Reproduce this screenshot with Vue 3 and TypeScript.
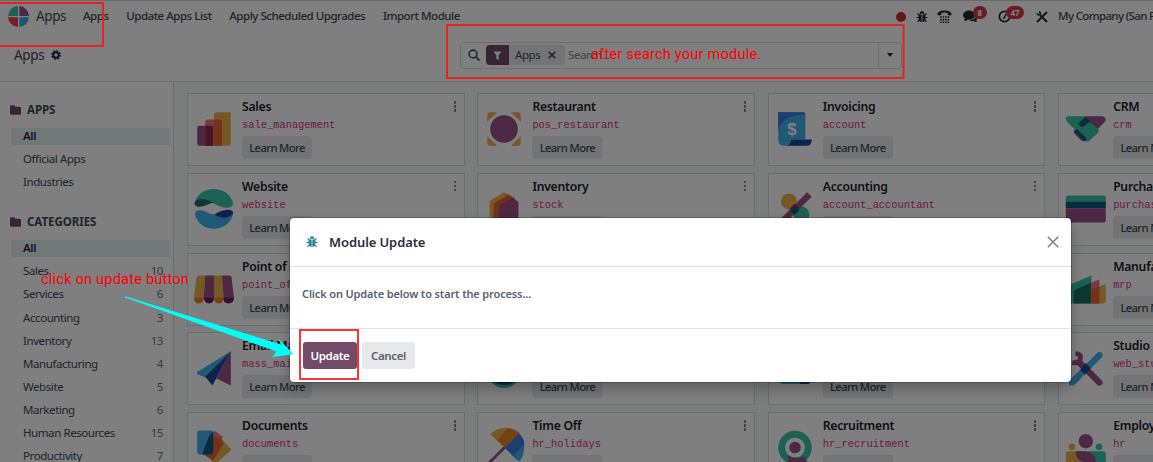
<script setup lang="ts">
interface AppCard {
  title: string
  code: string
  icon: string
}
interface Category {
  name: string
  count?: number
}

const menu: string[] = ['Apps', 'Update Apps List', 'Apply Scheduled Upgrades', 'Import Module']

const appFilters: Category[] = [{ name: 'All' }, { name: 'Official Apps' }, { name: 'Industries' }]

const categories: Category[] = [
  { name: 'All' },
  { name: 'Sales', count: 10 },
  { name: 'Services', count: 6 },
  { name: 'Accounting', count: 3 },
  { name: 'Inventory', count: 13 },
  { name: 'Manufacturing', count: 4 },
  { name: 'Website', count: 5 },
  { name: 'Marketing', count: 6 },
  { name: 'Human Resources', count: 15 },
  { name: 'Productivity', count: 7 },
]

const groups = [
  { title: 'APPS', items: appFilters },
  { title: 'CATEGORIES', items: categories },
]

const apps: AppCard[] = [
  { title: 'Sales', code: 'sale_management', icon: '<path fill="#985184" d="M4 24q0-3 3-3h17v25H7q-3 0-3-3z"/><path fill="#e8787d" d="M14 16q0-3 3-3h18v33H14z"/><path fill="#edb04a" d="M25 8q0-4 4-4h17v38q0 4-4 4H25z"/><path fill="#962b48" d="M14 21h10v25H14z"/><path fill="#ea6030" d="M25 13h7q3 0 3 3v30H25z"/>' },
  { title: 'Restaurant', code: 'pos_restaurant', icon: '<g fill="#edb04a"><path d="M4 8q0-4 4-4h8q-1 2-4 4.500Q8 12 4 16zM46 8q0-4-4-4h-8q1 2 4 4.500 4 3.500 8 7.500zM4 42q0 4 4 4h8q-1-2-4-4.500Q8 38 4 34zM46 42q0 4-4 4h-8q1-2 4-4.500 4-3.500 8-7.500z"/></g><circle cx="25" cy="25" r="17.300" fill="#985184"/>' },
  { title: 'Invoicing', code: 'account', icon: '<path fill="#3fb2ea" d="M4 4h31q3 0 3 3v31l-18 0q0 8-8 8-8 0-8-8z"/><path fill="#3a7be6" d="M4 4h31q3 0 3 3Q9 7 4 27z"/><path fill="#1c4596" d="M20 38h26q0 8-7 8H12q8 0 8-8z"/><text x="21" y="32.500" text-anchor="middle" font-family="Liberation Sans, sans-serif" font-weight="700" font-size="21" fill="#fff">$</text>' },
  { title: 'CRM', code: 'crm', icon: '<path fill="#36c4a6" d="M4 9h23l15 17q1 2-1 4L30 40q-2 2-4 0L2 15Q-1 9 4 9z"/><path fill="#985184" d="M26 9h21q6 2 3 7l-9 9-11-9-8 7-3-5z"/><path fill="#0f5b78" d="m17 18 8-8 7 5-9 7q-5 1-6-4z"/><path fill="#985184" d="M11 26h4l12 12q-4 4-7 1l-9-9z"/><path fill="#0f5b78" d="m15 25 12 12q-1 4-3 3L12 28z"/>' },
  { title: 'Website', code: 'website', icon: '<path fill="#36c4a6" d="M1 18C6-6 43-6 49 18c-1 7-13 7-22 1-6-4-9-2-15 1-7 3-10 3-11-2z"/><path fill="#1a6f66" d="M1 16c5-6 16-3 23 1-7 2-8 4-15 5-6 1-9-2-8-6z"/><path fill="#3fb2ea" d="M1 31c5 25 42 25 48 0 0-7-10-6-21-1-4 3-8 1-14-2-8-3-12-1-13 3z"/><path fill="#1c4596" d="M26 32c7-4 21-10 23-2-4 7-15 8-23 2z"/>' },
  { title: 'Inventory', code: 'stock', icon: '<path fill="#edb04a" d="M25 4 7 15v31h18z"/><path fill="#edb04a" d="m25 4 9 5-14 9z"/><path fill="#ea6030" d="M12 18 31 7l8 5-16 30H12z"/><path fill="#985184" d="m19 20 16-9 8 5v30H19z"/>' },
  { title: 'Accounting', code: 'account_accountant', icon: '<circle cx="17.500" cy="15.500" r="10" fill="#edb04a"/><circle cx="33" cy="32" r="10" fill="#36c4a6"/><path stroke="#985184" stroke-width="8" d="M43 7 8 42"/><path stroke="#962b48" stroke-width="7" d="m27 21-6 6"/><path stroke="#0f5b78" stroke-width="7" d="m28 24-6 6"/>' },
  { title: 'Purchase', code: 'purchase', icon: '<path fill="#36c4a6" d="M1 11q0-3 3-3h44q3 0 3 3v6H1z"/><path fill="#0f5b78" d="M1 16h50v8H1z"/><path fill="#985184" d="M1 24h50v15q0 3-3 3H4q-3 0-3-3z"/>' },
  { title: 'Point of Sale', code: 'point_of_sale', icon: '<path fill="#edb04a" d="M6 8h8l-2 29H0L3 11q1-3 3-3zM25 8h10l2 29H25z"/><path fill="#985184" d="M14 8h11v29H12zM35 8h9q3 0 3 3l3 26H37z"/><path fill="#e68420" d="M0 36h12q0 7-6 7t-6-7zM25 36h12q0 7-6 7t-6-7z"/><path fill="#6c1f5c" d="M12 36h13q0 7-6 7t-7-7zM37 36h13q0 7-7 7t-6-7z"/>' },
  { title: 'Project', code: 'project', icon: '<circle cx="25" cy="25" r="19" fill="#36c4a6"/>' },
  { title: 'eCommerce', code: 'website_sale', icon: '<circle cx="25" cy="25" r="19" fill="#3fb2ea"/>' },
  { title: 'Manufacturing', code: 'mrp', icon: '<path fill="#36c4a6" d="m1 22 32-14v35H4q-3 0-3-3z"/><path fill="#1a6f66" d="M11 27 33 17v26H11z"/><path fill="#e8787d" d="m33 17 10-4v30H33z"/><path fill="#edb04a" d="m43 22 8-3v21q0 3-3 3H33z"/><path fill="#ea6030" d="m33 26 10-4v21H33z"/>' },
  { title: 'Email Marketing', code: 'mass_mailing', icon: '<path fill="#3fb2ea" d="M46 4 4 30q-1 2 1 3l9 4z"/><path fill="#985184" d="M46 4v43L28 38z"/><path fill="#1c4596" d="M46 4 14 36l9 11z"/>' },
  { title: 'Timesheets', code: 'timesheet_grid', icon: '<circle cx="25" cy="29.500" r="20.500" fill="#36c4a6"/><ellipse cx="25" cy="38" rx="15" ry="8" fill="#0f5b78"/>' },
  { title: 'Expenses', code: 'hr_expense', icon: '<path fill="#3fb2ea" d="M6 10h38v31q0 4-4 4H10q-4 0-4-4z"/><path fill="#1c4596" d="M31 24h13v17q0 4-4 4h-9z"/>' },
  { title: 'Studio', code: 'web_studio', icon: '<path stroke="#3fb2ea" stroke-width="8" stroke-linecap="round" d="M43 9 16 36"/><path fill="#3fb2ea" d="M14 32 5 41v6h6l9-9z"/><path stroke="#985184" stroke-width="8" stroke-linecap="round" d="m18 18 25 25"/><path fill="none" stroke="#985184" stroke-width="6" d="M13 7q8 0 6 7-3 6-10 4"/><path fill="#1c4596" d="m26 19 6 6-7 8-6-6z"/>' },
  { title: 'Documents', code: 'documents', icon: '<path fill="#edb04a" d="m34 13 11 12q2 2 0 4L29 43q-2 2-5 0l-8-9z"/><path fill="#e8787d" d="M22 6q3-3 6-1l8 6-3 12-13 4z"/><path fill="#ea6030" d="m24 11 9 3 4 5-13 22-12-8z"/><path fill="#3fb2ea" d="M4 6q0-3 3-3h14q3 0 3 3v24q0 3-3 3H7q-3 0-3-3z"/><path fill="#0f5b78" d="M19 10q2-4 5-5v25q0 3-3 3H10z"/>' },
  { title: 'Time Off', code: 'hr_holidays', icon: '<path stroke="#985184" stroke-width="3.500" d="M27 23 5 45"/><path fill="#edb04a" d="M26 24.600 8 8Q15 0 26 0l8 1z"/><path fill="#e68420" d="M17 15 30 0q9 1 15 7L26 24.600z"/><path fill="#3a7be6" d="M26 24.600 44 7q8 8 6 18l-9 15z"/><path fill="#3fb2ea" d="m36 35 14-14q1 14-6 21z"/>' },
  { title: 'Recruitment', code: 'hr_recruitment', icon: '<circle cx="25" cy="24.500" r="16.700" fill="none" stroke="#36c4a6" stroke-width="8.500"/><circle cx="25" cy="24.500" r="7.200" fill="#985184"/><path fill="#985184" d="M16 34q9 6 20 2l10 13H16z"/>' },
  { title: 'Employees', code: 'hr', icon: '<circle cx="26" cy="16.500" r="9" fill="#985184"/><circle cx="8.700" cy="23.500" r="4.200" fill="#edb04a"/><circle cx="42.500" cy="23.500" r="4.200" fill="#36c4a6"/><path fill="#edb04a" d="M1 33q0-4 4-4h15v16H1z"/><path fill="#36c4a6" d="M28 29h19q4 0 4 4v12H28z"/><path fill="#985184" d="M13 29h13q12 2 13 14H25Q14 42 13 29z"/>' },
]
</script>

<template>
  <div class="screen">
    <header class="navbar">
      <svg class="logo" viewBox="0 0 21 21">
        <path fill="#35c9a5" d="M10 0v10H0A10.500 10.500 0 0 1 10 0z" />
        <path fill="#985184" d="M11.400 0v10H21A10.500 10.500 0 0 0 11.400 0z" />
        <path fill="#ee4147" d="M10 21V11.300H0A10.500 10.500 0 0 0 10 21z" />
        <path fill="#3aabe8" d="M11.400 21V11.300H21A10.500 10.500 0 0 1 11.400 21z" />
      </svg>
      <span class="brand">Apps</span>
      <nav class="menu">
        <span v-for="m in menu" :key="m">{{ m }}</span>
      </nav>
      <div class="tray">
        <i class="dot"></i>
        <svg class="bug" viewBox="0 0 12 12"><g fill="#1f2937"><path d="M3.600 2.800a2.400 2.500 0 0 1 4.800 0z" /><path d="M2.700 3.400h2.900V11Q2.700 10.600 2.700 8zM6.400 3.400h2.900V8q0 2.600-2.900 3z" /></g><path fill="none" stroke="#1f2937" stroke-width="1.200" d="M3.400 4.200 1.500 2.500M8.600 4.200l1.900-1.700M3 6.500H.6M9 6.500h2.400M3.400 9l-1.900 1.800M8.600 9l1.900 1.800" /></svg>
        <svg class="phone" viewBox="0 0 15 14"><path fill="#1f2937" d="M.3 5Q.3.500 7.500.500T14.700 5q-2 1-4-.3V3Q7.500 2 4.300 3v1.700Q2.300 6 .3 5z" /><path stroke="#1f2937" stroke-width="1.600" stroke-dasharray="1.600 .9" d="M3.100 7h10M3.100 9.600h10M3.100 12.200h10" /></svg>
        <span class="with-badge chat">
          <svg viewBox="0 0 15 13"><ellipse cx="6" cy="5.200" rx="6" ry="4.600" fill="#1f2937" /><path fill="#1f2937" d="M2 8 1 11q3 0 4.500-2zM13.500 5q2 3-.2 5.200L14 12q-2 0-3-1-3 .5-5-.8 6 .2 7.500-5.200z" /></svg>
          <b>8</b>
        </span>
        <span class="with-badge clock">
          <svg viewBox="0 0 13 13"><circle cx="6.500" cy="6.500" r="5.200" fill="none" stroke="#1f2937" stroke-width="1.700" /><path fill="none" stroke="#1f2937" stroke-width="1.300" d="M8.500 3.500 6.500 7v1H5" /></svg>
          <b>47</b>
        </span>
        <svg class="tools" viewBox="0 0 12 12"><path fill="none" stroke="#1f2937" stroke-width="1.900" d="M11 1 1 11M4 4l7 7" /><path fill="none" stroke="#1f2937" stroke-width="1.600" d="M.8 2.500q2 2.500 3.700.2Q4.600 1.500 3 .7" /></svg>
        <span class="company">My Company (San Francisco)</span>
      </div>
    </header>

    <section class="control">
      <span class="crumb">Apps</span>
      <svg class="gear" viewBox="0 0 10 10"><circle cx="5" cy="5" r="2.700" fill="none" stroke="#1f2937" stroke-width="2" /><circle cx="5" cy="5" r="4.300" fill="none" stroke="#1f2937" stroke-width="1.400" stroke-dasharray="1.700 1.677" /></svg>
      <div class="search">
        <div class="field">
          <svg class="lens" viewBox="0 0 12 12"><circle cx="5" cy="5" r="3.900" fill="none" stroke="#4b5563" stroke-width="1.600" /><path stroke="#4b5563" stroke-width="1.900" d="m8 8 3.500 3.500" /></svg>
          <span class="facet">
            <span class="funnel"><svg viewBox="0 0 10 10"><path fill="#fff" d="M.5.500h9L6.300 4.600V10L3.700 8.500V4.600z" /></svg></span>
            <span class="facet-name">Apps</span>
            <svg class="remove" viewBox="0 0 8 8"><path stroke="#4b5563" stroke-width="1.900" d="m.8.800 6.400 6.400M7.200.8.800 7.200" /></svg>
          </span>
          <span class="placeholder">Search...</span>
        </div>
        <div class="toggle"><i></i></div>
      </div>
    </section>

    <main class="content">
      <aside class="sidebar">
        <section v-for="g in groups" :key="g.title" class="group">
          <h2>
            <svg viewBox="0 0 11 10"><path fill="#714b67" d="M0 1.500Q0 .3 1.200.3h2.600Q5 .3 5 1.700h4.700Q11 1.700 11 3v5.500Q11 9.700 9.800 9.700H1.200Q0 9.700 0 8.500z" /></svg>
            {{ g.title }}
          </h2>
          <ul>
            <li v-for="(c, i) in g.items" :key="c.name" :class="{ active: i === 0 }">
              <span>{{ c.name }}</span><em v-if="c.count">{{ c.count }}</em>
            </li>
          </ul>
        </section>
      </aside>

      <div class="board">
        <article v-for="a in apps" :key="a.code" class="card">
          <svg class="app-icon" viewBox="0 0 50 50" v-html="a.icon"></svg>
          <div class="info">
            <h3>{{ a.title }}</h3>
            <code>{{ a.code }}</code>
            <button>Learn More</button>
          </div>
          <span class="kebab"><i></i><i></i><i></i></span>
        </article>
      </div>
    </main>

    <div class="backdrop"></div>

    <div class="modal">
      <header>
        <svg class="modal-bug" viewBox="0 0 12 12"><g fill="#2a858c"><path d="M3.600 2.800a2.400 2.500 0 0 1 4.800 0z" /><path d="M2.600 3.500h3.100V11Q2.600 10.600 2.600 8zM6.300 3.500h3.100V8q0 2.600-3.100 3z" /></g><path fill="none" stroke="#2a858c" stroke-width="1.100" d="M3.400 4.200 1.500 2.500M8.600 4.200l1.900-1.700M3 6.500H.6M9 6.500h2.400M3.400 9l-1.900 1.800M8.600 9l1.900 1.800" /></svg>
        <h4>Module Update</h4>
        <svg class="close" viewBox="0 0 12 12"><path stroke="#858585" stroke-width="1.600" d="m.8.800 10.400 10.400M11.200.8.800 11.200" /></svg>
      </header>
      <p>Click on Update below to start the process...</p>
      <footer>
        <button class="primary">Update</button>
        <button class="secondary">Cancel</button>
      </footer>
    </div>

    <svg class="notes" viewBox="0 0 1153 462">
      <g fill="none" stroke-width="2">
        <path stroke="#e62222" d="M0 3h103v43H0M447 25h456.500v53H447z" />
        <path stroke="#fb3434" d="M300 330h58v49h-58z" />
      </g>
      <path fill="#00fff6" d="M125 296.300 281 344.500 278.300 338.500 293.500 354.300 272.300 357 276.500 351.500 124.500 297.300z" />
    </svg>
    <span class="note note-search">after search your module.</span>
    <span class="note note-update">click on update button</span>
  </div>
</template>

<style>
body { margin: 0; overflow: hidden; }
</style>

<style scoped>
* { box-sizing: border-box; }
.screen {
  position: relative;
  width: 1153px;
  height: 462px;
  overflow: hidden;
  background: #fff;
  color: #414855;
  font-family: "Noto Sans", "Open Sans", sans-serif;
  font-size: 11.5px;
  letter-spacing: -0.42px;
  line-height: 16px;
  white-space: nowrap;
}
h2, h3, h4, p, ul { margin: 0; padding: 0; }
svg { display: block; flex: none; }

.navbar { display: flex; align-items: center; height: 33px; padding: 0 0 1px 8px; border-top: 1px solid #d4d4d4; font-weight: 500; letter-spacing: -0.47px; }
.logo { width: 21px; height: 21px; }
.brand { width: 47px; padding: 0 0 1px 7px; font-size: 13.500px; letter-spacing: -0.4px; font-weight: 400; }
.menu { display: flex; gap: 17.700px; margin-left: 7px; padding-bottom: 2px; }
.tray { position: absolute; left: 896px; top: 1px; height: 31px; display: flex; align-items: center; }
.dot { width: 10px; height: 10px; border-radius: 50%; background: #cf2a2f; }
.bug { width: 12px; height: 12px; margin-left: 10px; }
.phone { width: 15px; height: 14px; margin-left: 9px; }
.with-badge { position: relative; }
.with-badge b {
  position: absolute; top: -4px; height: 13px; padding: 0 4.500px; border-radius: 7px;
  background: #dc3545; color: #fff; font-size: 8px; line-height: 13px; letter-spacing: 0;
}
.chat { margin-left: 11px; }
.chat svg { width: 15px; height: 13px; }
.chat b { left: 10px; }
.clock { margin-left: 20px; }
.clock svg { width: 13px; height: 13px; }
.clock b { left: 8px; }
.tools { width: 12px; height: 12px; margin-left: 25px; }
.company { margin-left: 10px; padding-bottom: 2px; letter-spacing: -0.65px; }

.control { display: flex; align-items: center; height: 49px; padding: 0 0 4px 14px; border-bottom: 1px solid #dee0e3; }
.crumb { width: 37px; font-size: 13.500px; letter-spacing: -0.3px; }
.gear { width: 10px; height: 10px; }
.search { display: flex; width: 442px; height: 27px; margin-left: 399px; border: 1px solid #d8dadd; border-radius: 4px; }
.field { display: flex; align-items: center; flex: 1; padding-left: 7px; }
.lens { width: 12px; height: 12px; }
.facet { display: flex; align-items: center; width: 79px; height: 20px; margin-left: 6px; border-radius: 4px; overflow: hidden; background: #e7e9ed; }
.funnel { display: grid; place-items: center; width: 23px; height: 20px; background: #714b67; }
.funnel svg { width: 9px; height: 9px; }
.facet-name { width: 33px; padding-left: 6px; }
.remove { width: 8px; height: 8px; margin-left: 6px; }
.placeholder { margin-left: 3px; color: #808690; }
.toggle { display: grid; place-items: center; width: 23px; border-left: 1px solid #d8dadd; }
.toggle i { border: 3.500px solid transparent; border-top: 4px solid #1f2937; border-bottom: 0; }

.content { display: flex; height: 380px; overflow: hidden; }
.sidebar { flex: none; width: 174px; padding: 19px 3px 0 10px; border-right: 1px solid #d5d8dc; }
.group { margin-bottom: 22px; }
h2 { display: flex; align-items: center; gap: 6px; height: 17px; margin-bottom: 10px; font-size: 11.5px; letter-spacing: -0.05px; font-weight: 700; }
h2 svg { width: 11px; height: 10px; }
ul { list-style: none; display: flex; flex-direction: column; gap: 6px; padding-left: 1px; }
li { display: flex; justify-content: space-between; height: 17.100px; line-height: 16px; padding: 0 7px 0 12px; }
li.active { background: #e3f0f0; color: #1f2937; font-weight: 600; }
li em { font-style: normal; color: #6b7280; }

.board {
  flex: none; display: grid; grid-template-columns: repeat(4, 277.700px); grid-auto-rows: 73px; gap: 6.800px 12.700px;
  width: 1180px; padding: 11px 0 0 13px; background: #f6faf8;
}
.card { position: relative; display: flex; border: 1px solid #d8dadd; background: #fff; padding: 5px 0 0 6px; }
.app-icon { width: 40px; height: 40px; margin-top: 10px; overflow: visible; fill: none; }
.info { display: flex; flex-direction: column; align-items: flex-start; margin-left: 8px; }
h3 { height: 17px; font-size: 12.200px; letter-spacing: -0.25px; line-height: 16px; font-weight: 600; color: #1c212c; }
code { height: 20px; font: 10.400px/19px "Liberation Mono", monospace; letter-spacing: 0; color: #d63384; }
button {
  border: 0; border-radius: 3px; padding: 0; background: #e7e9ed; color: #414855; font-family: inherit;
  font-size: 11.500px; font-weight: 500; letter-spacing: -0.35px; text-align: center;
}
.card button { width: 70px; height: 23px; font-size: 11.200px; letter-spacing: -0.6px; }
.kebab { position: absolute; right: 8px; top: 7px; display: grid; gap: 1.500px; }
.kebab i { width: 2px; height: 2.500px; background: #848a94; }

.backdrop { position: absolute; inset: 0; background: rgba(0, 0, 0, 0.5); }

.modal {
  position: absolute; left: 290px; top: 218px; width: 781px; height: 164px;
  background: #fff; border-radius: 4px; box-shadow: 0 0 0 1px rgba(0, 0, 0, 0.22), 0 7px 14px rgba(0, 0, 0, 0.25);
}
.modal header { display: flex; align-items: center; height: 49px; padding: 0 12px 0 16px; border-bottom: 1px solid #e2e3e5; }
.modal-bug { width: 12px; height: 12px; }
h4 { flex: 1; margin-left: 11px; font-size: 13px; font-weight: 600; letter-spacing: -0.1px; color: #2b303c; }
.close { width: 12px; height: 12px; }
.modal p { height: 62px; padding: 19px 12px 0; border-bottom: 1px solid #e2e3e5; font-size: 11px; font-weight: 600; letter-spacing: -0.140px; color: #5a606d; }
.modal footer { display: flex; gap: 5px; padding: 13px; }
.modal footer button { height: 27px; padding-bottom: 1px; font-weight: 600; }
.modal .primary { width: 54px; background: #714b67; color: #fff; }
.modal .secondary { width: 53px; color: #5a606d; }

.notes { position: absolute; inset: 0; width: 1153px; height: 462px; }
.note { position: absolute; color: #f00; font: 14.500px/18px Roboto, sans-serif; letter-spacing: 0.230px; }
.note-search { left: 591px; top: 46px; }
.note-update { left: 41px; top: 271px; }
</style>
